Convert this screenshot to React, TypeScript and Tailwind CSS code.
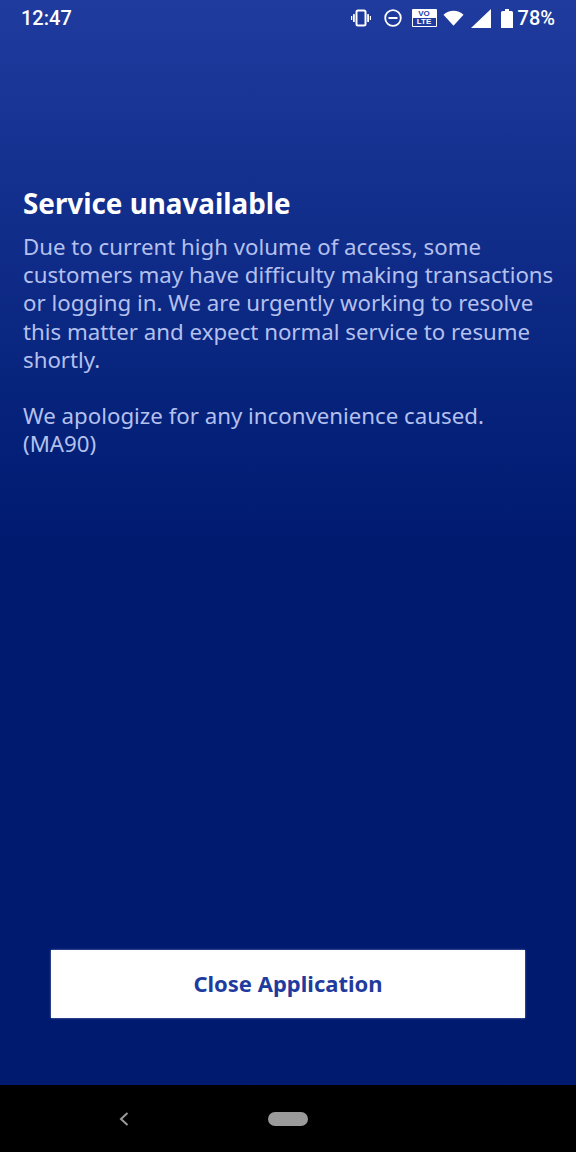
export default function App() {
  return (
    <div className="flex h-[1152px] w-[576px] flex-col overflow-hidden bg-black font-['Noto_Sans',sans-serif]">
      <div className="flex h-[1085px] flex-col bg-gradient-to-b from-[#1f3b9e] from-0% to-[#001a70] to-50%">
        <div className="flex h-[36px] items-center justify-between pl-[21px] pr-[21px]">
          <span className="font-['Roboto',sans-serif] text-[20px] font-medium leading-none text-white">12:47</span>
          <div className="flex items-center text-white">
            <svg width="20" height="18" viewBox="0 0 20 18" className="mr-[13px]" fill="none">
              <rect x="5.5" y="1.5" width="9" height="15" rx="1.5" stroke="#fff" strokeWidth="2" />
              <rect x="2" y="5" width="1.8" height="8" rx=".6" fill="#fff" />
              <rect x="16.2" y="5" width="1.8" height="8" rx=".6" fill="#fff" />
              <rect x="0" y="7" width="1.2" height="4" fill="#fff" />
              <rect x="18.8" y="7" width="1.2" height="4" fill="#fff" />
            </svg>
            <svg width="18" height="18" viewBox="0 0 18 18" className="mr-[10px]" fill="none">
              <circle cx="9" cy="9" r="7.8" stroke="#fff" strokeWidth="1.8" />
              <rect x="4.5" y="8" width="9" height="2" fill="#fff" />
            </svg>
            <div className="mr-[6px] flex h-[18px] w-[25px] flex-col items-center justify-between rounded-[1px] bg-white pt-[1px] pb-[1px]">
              <span className="font-['Liberation_Sans',sans-serif] text-[8px] font-bold leading-[8px] text-[#1f3b9e]">VO</span>
              <span className="flex h-[8px] w-[23px] items-center justify-center bg-[#1f3b9e] font-['Liberation_Sans',sans-serif] text-[8px] font-bold leading-[8px] text-white">LTE</span>
            </div>
            <svg width="21" height="16" viewBox="0 0 22 16" className="mr-[7px]">
              <path d="M0.5 4.5C3.5 1.9 7 .5 11 .5s7.5 1.4 10.5 4L11 16z" fill="#fff" />
            </svg>
            <svg width="20" height="19" viewBox="0 0 20 19" className="mr-[10px]">
              <path d="M20 0V19H0z" fill="#fff" />
            </svg>
            <svg width="12" height="19" viewBox="0 0 12 19" className="mr-[5px]">
              <path d="M4 0h4v2h2.5A1.5 1.5 0 0 1 12 3.5V19H0V3.5A1.5 1.5 0 0 1 1.5 2H4z" fill="#fff" />
              <rect x="1.5" y="3.5" width="9" height="3" fill="#fff" fillOpacity=".3" />
            </svg>
            <span className="font-['Roboto',sans-serif] text-[20px] font-medium leading-none text-white">78%</span>
          </div>
        </div>
        <div className="px-[23px] pt-[149px]">
          <h1 className="text-[27.8px] font-bold leading-[36px] text-white">Service unavailable</h1>
          <p className="mt-[12px] w-[533px] text-[22.25px] leading-[28.2px] text-[#b4c0ee]">
            Due to current high volume of access, some customers may have difficulty making transactions or logging in. We are urgently working to resolve this matter and expect normal service to resume shortly.
          </p>
          <p className="mt-[28px] w-[533px] text-[22.25px] leading-[28.2px] text-[#b4c0ee]">
            We apologize for any inconvenience caused. (MA90)
          </p>
        </div>
        <div className="mt-auto px-[51px] pb-[67px]">
          <button className="flex h-[68px] w-full items-center justify-center bg-white text-[22px] font-bold text-[#1f3b9e] shadow-[0_0_2px_rgba(255,255,255,0.5)]">
            <span className="-translate-y-px">Close Application</span>
          </button>
        </div>
      </div>
      <div className="relative flex flex-1 items-center justify-center">
        <svg width="10" height="14" viewBox="0 0 10 14" className="absolute left-[119px] top-[27px]" fill="none">
          <path d="M8.5 1L2 7l6.5 6" stroke="#9a9a9a" strokeWidth="2" />
        </svg>
        <div className="h-[14px] w-[40px] rounded-full bg-[#9a9a9a]" />
      </div>
    </div>
  );
}
